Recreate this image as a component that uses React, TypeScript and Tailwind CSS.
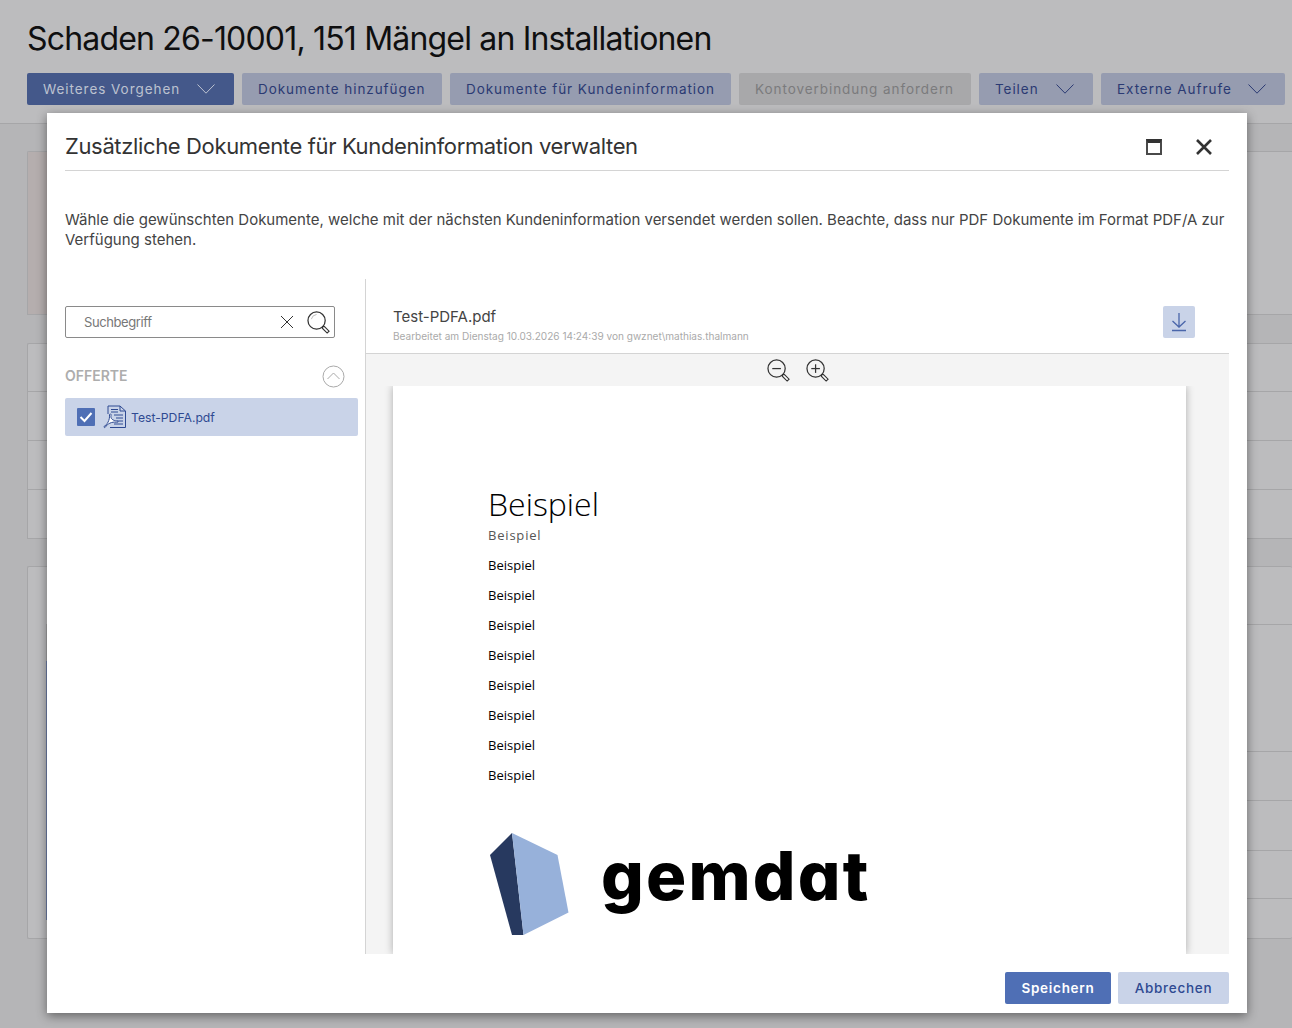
import React from "react";

const Chevron = ({ color }: { color: string }) => (
  <svg width="18" height="10" viewBox="0 0 18 10" fill="none" className="shrink-0">
    <path d="M0.5 0.5 L9 9.2 L17.5 0.5" stroke={color} strokeWidth="1" />
  </svg>
);

const Lens = ({ kind, size }: { kind: "plain" | "minus" | "plus"; size: number }) => (
  <svg width={size} height={size} viewBox="0 0 24 24" fill="none" className="shrink-0">
    <circle cx="10" cy="10" r="9" stroke="#333" strokeWidth="1.3" />
    {kind === "plain" && <path d="M4.5 8.5 A6.5 6.5 0 0 1 10 3.6" stroke="#bbb" strokeWidth="1" />}
    {kind !== "plain" && <path d="M5.5 10 H14.5" stroke="#333" strokeWidth="1.3" />}
    {kind === "plus" && <path d="M10 5.5 V14.5" stroke="#333" strokeWidth="1.3" />}
    <path d="M16.3 16.3 L18 16 L23 21 L21 23 L16 18 Z" fill="#fff" stroke="#333" strokeWidth="1.2" />
  </svg>
);

const PdfIcon = () => (
  <svg width="24" height="24" viewBox="0 0 24 24" fill="none" className="shrink-0">
    <path d="M5 9 V1 H17 L22.5 6 V22.5 H7" stroke="#2f4a92" strokeWidth="1" />
    <path d="M17 1 V6 H22.5" stroke="#2f4a92" strokeWidth="1" />
    <path d="M8 4.5 H15 M8 7 H15 M11 10 H20 M13 13 H20 M14 16 H20 M11 19 H20" stroke="#2f4a92" strokeWidth="1" />
    <path d="M1 21.5 C4 20 7 15 6.5 10 C6.4 8.5 8.4 8.5 8 10.5 C7.3 14 10 15.5 14 16 C16 16.3 15.5 17.6 13.5 17.2 C9 16.4 4 19 2.5 22 C2 23 0.5 22.4 1 21.5 Z" fill="#fff" stroke="#2f4a92" strokeWidth="1" />
  </svg>
);

const buttons = [
  { label: "Weiteres Vorgehen", w: "w-[207px]", cls: "bg-[#44588a] text-[#bcc2d0]", chev: "#bcc2d0" },
  { label: "Dokumente hinzufügen", w: "w-[200px]", cls: "bg-[#969cb0] text-[#2b3a73]" },
  { label: "Dokumente für Kundeninformation", w: "w-[281px]", cls: "bg-[#969cb0] text-[#2b3a73]" },
  { label: "Kontoverbindung anfordern", w: "w-[232px]", cls: "bg-[#a8a8aa] text-[#7b7b7d]" },
  { label: "Teilen", w: "w-[114px]", cls: "bg-[#969cb0] text-[#2b3a73]", chev: "#2b3a73" },
  { label: "Externe Aufrufe", w: "w-[184px]", cls: "bg-[#969cb0] text-[#2b3a73]", chev: "#2b3a73" },
];

const lines = ["l1", "l2", "l3", "l4", "l5", "l6", "l7", "l8"];

export default function App() {
  return (
    <div className="relative h-[1028px] w-[1292px] overflow-hidden bg-[#b5b5b7] font-['Inter',sans-serif]">
      {/* page behind the dialog */}
      <header className="h-[124px] border-b border-[#a6a6a8] bg-[#bcbcbe] pl-[27px]">
        <h1 className="pt-[19px] text-[32px] leading-[40px] font-normal tracking-[-0.82px] text-[#0f0f10]">
          Schaden 26-10001, 151 Mängel an Installationen
        </h1>
        <div className="mt-[14px] flex gap-2">
          {buttons.map((b) => (
            <div
              key={b.label}
              className={`flex h-8 items-center justify-between rounded-[2px] pl-4 pr-[19px] text-[13.5px] tracking-[0.94px] ${b.w} ${b.cls}`}
            >
              <span className="whitespace-nowrap">{b.label}</span>
              {b.chev && <Chevron color={b.chev} />}
            </div>
          ))}
        </div>
      </header>
      <main className="flex flex-col pl-[27px] pt-[27px]">
        <section className="flex h-[164px] rounded-tl-[2px] border border-r-0 border-[#a6a6a8] bg-[#bcbcbe]">
          <div className="w-[19px] bg-[#b5aeae]" />
        </section>
        <section className="mt-[28px] flex h-[196px] flex-col rounded-tl-[2px] border border-r-0 border-[#a6a6a8] bg-[#bcbcbe]">
          <div className="h-[48px] border-b border-[#a6a6a8]" />
          <div className="h-[49px] border-b border-[#a6a6a8]" />
          <div className="h-[49px] border-b border-[#a6a6a8]" />
          <div className="h-[48px]" />
        </section>
        <section className="mt-[27px] flex h-[373px] rounded-[2px] border border-r-0 border-[#a6a6a8] bg-[#bcbcbe]">
          <div className="w-[18px]" />
          <div className="flex w-[2px] flex-col">
            <div className="h-[57px]" />
            <div className="h-[37px] bg-[#a3a3a5]" />
            <div className="h-[259px] bg-[#6e7fa8]" />
          </div>
          <div className="flex flex-1 flex-col">
            <div className="h-[58px] border-b border-[#a6a6a8]" />
            <div className="h-[127px] border-b border-[#a6a6a8]" />
            <div className="h-[49px] border-b border-[#a6a6a8]" />
            <div className="h-[50px] border-b border-[#a6a6a8]" />
            <div className="h-[48px] border-b border-[#a6a6a8]" />
          </div>
        </section>
      </main>

      {/* dialog */}
      <div className="absolute left-[47px] top-[113px] flex h-[900px] w-[1200px] flex-col bg-white px-[18px] shadow-[0_3px_10px_rgba(0,0,0,0.45)]">
        <div className="flex h-[58px] shrink-0 items-center justify-between border-b border-[#d4d4d4] pt-2">
          <h2 className="text-[22px] leading-[28px] font-normal tracking-[-0.36px] text-[#333]">
            Zusätzliche Dokumente für Kundeninformation verwalten
          </h2>
          <div className="flex items-center gap-[33px] pr-[16px] pt-[2px]">
            <div className="h-4 w-4 border-2 border-t-[4px] border-[#4a4a4a] border-t-[#333]" />
            <svg width="18" height="18" viewBox="0 0 18 18" fill="none">
              <path d="M2 2 L16 16 M16 2 L2 16" stroke="#333" strokeWidth="2.6" />
            </svg>
          </div>
        </div>
        <p className="mt-[39px] h-[69px] shrink-0 text-[15px] leading-[20px] text-[#444]">
          Wähle die gewünschten Dokumente, welche mit der nächsten Kundeninformation versendet werden sollen. Beachte, dass nur PDF Dokumente im Format PDF/A zur Verfügung stehen.
        </p>
        <div className="flex h-[675px] shrink-0">
          <aside className="w-[301px] shrink-0 border-r border-[#d4d4d4] pt-[27px]">
            <div className="flex h-8 w-[270px] items-center justify-between rounded-[2px] border border-[#8a8a8a] pl-[18px] pr-[4px]">
              <span className="pt-[2px] text-[13px] tracking-[-0.4px] text-[#777]">Suchbegriff</span>
              <div className="flex items-center gap-[13px]">
                <svg width="14" height="14" viewBox="0 0 14 14" fill="none">
                  <path d="M1 1 L13 13 M13 1 L1 13" stroke="#333" strokeWidth="1" />
                </svg>
                <Lens kind="plain" size={23} />
              </div>
            </div>
            <div className="mt-[26px] flex h-[24px] w-[293px] items-center justify-between pr-[13px]">
              <span className="pb-[2px] text-[14px] font-semibold text-[#adadad]">OFFERTE</span>
              <svg width="23" height="23" viewBox="0 0 23 23" fill="none">
                <circle cx="11.5" cy="11.5" r="10.5" stroke="#aaa" />
                <path d="M5.5 14 L11.5 8 L17.5 14" stroke="#aaa" />
              </svg>
            </div>
            <div className="mt-[10px] flex h-[38px] w-[293px] items-center rounded-[2px] bg-[#c9d3e8] pl-3">
              <div className="flex h-[18px] w-[18px] items-center justify-center rounded-[1px] bg-[#4f6fb5]">
                <svg width="14" height="12" viewBox="0 0 14 12" fill="none">
                  <path d="M1.5 6 L5.5 10 L12.5 2" stroke="#fff" strokeWidth="2" />
                </svg>
              </div>
              <div className="ml-[8px]">
                <PdfIcon />
              </div>
              <span className="ml-[4px] pt-[3px] text-[12.2px] text-[#2f4a92]">Test-PDFA.pdf</span>
            </div>
          </aside>
          <div className="flex min-w-0 flex-1 flex-col">
            <div className="flex h-[75px] shrink-0 items-start justify-between border-b border-[#d4d4d4] pl-[27px] pr-[34px] pt-[27px]">
              <div className="pt-px">
                <div className="text-[15px] leading-[20px] text-[#444]">Test-PDFA.pdf</div>
                <div className="mt-[2px] text-[10.05px] leading-[14px] text-[#aaa]">
                  Bearbeitet am Dienstag 10.03.2026 14:24:39 von gwznet\mathias.thalmann
                </div>
              </div>
              <div className="flex h-8 w-8 items-center justify-center rounded-[2px] bg-[#c9d3e8]">
                <svg width="16" height="20" viewBox="0 0 16 20" fill="none">
                  <path d="M8 1 V15 M1.5 9 L8 15 L14.5 9 M1 18.5 H15" stroke="#4a66aa" strokeWidth="1.3" />
                </svg>
              </div>
            </div>
            <div className="flex min-h-0 flex-1 flex-col bg-[#f4f4f4]">
              <div className="flex h-[32px] shrink-0 items-center gap-[16px] pl-[401px]">
                <Lens kind="minus" size={23} />
                <Lens kind="plus" size={23} />
              </div>
              <div className="min-h-0 flex-1 overflow-hidden pl-[27px]">
                <div className="h-full w-[793px] bg-white pl-[95px] pt-[98px] shadow-[0_0_8px_rgba(0,0,0,0.3)] font-['Open_Sans',sans-serif]">
                  <div className="text-[32px] leading-[40px] font-light text-black">Beispiel</div>
                  <div className="mt-[1px] text-[13px] leading-[20px] tracking-[0.8px] text-[#555]">Beispiel</div>
                  <div className="mt-[10px] flex flex-col gap-[10px]">
                    {lines.map((l) => (
                      <div key={l} className="text-[13px] leading-[20px] text-black">Beispiel</div>
                    ))}
                  </div>
                  <div className="ml-px mt-[48px] flex items-start">
                    <svg width="80" height="102" viewBox="0 0 80 102" fill="none" className="shrink-0">
                      <polygon points="1,22 23,0 34.5,102 23,102" fill="#27395f" />
                      <polygon points="23,0 68.5,22 79.5,79.5 34.5,102" fill="#97b1da" />
                    </svg>
                    <span className="ml-[32px] mt-[-2px] font-['Inter',sans-serif] text-[67px] leading-[90px] font-extrabold tracking-[2.2px] text-black [font-feature-settings:'cv11']">
                      gemdat
                    </span>
                  </div>
                </div>
              </div>
            </div>
          </div>
        </div>
        <div className="flex flex-1 items-start justify-end gap-[7px] pt-[18px]">
          <div className="flex h-8 w-[106px] items-center justify-center rounded-[2px] bg-[#4f6fb5] text-[13.5px] font-semibold tracking-[0.72px] text-white">
            Speichern
          </div>
          <div className="flex h-8 w-[111px] items-center justify-center rounded-[2px] bg-[#c9d3e8] text-[13.5px] font-medium tracking-[0.72px] text-[#2f4a92]">
            Abbrechen
          </div>
        </div>
      </div>
    </div>
  );
}
